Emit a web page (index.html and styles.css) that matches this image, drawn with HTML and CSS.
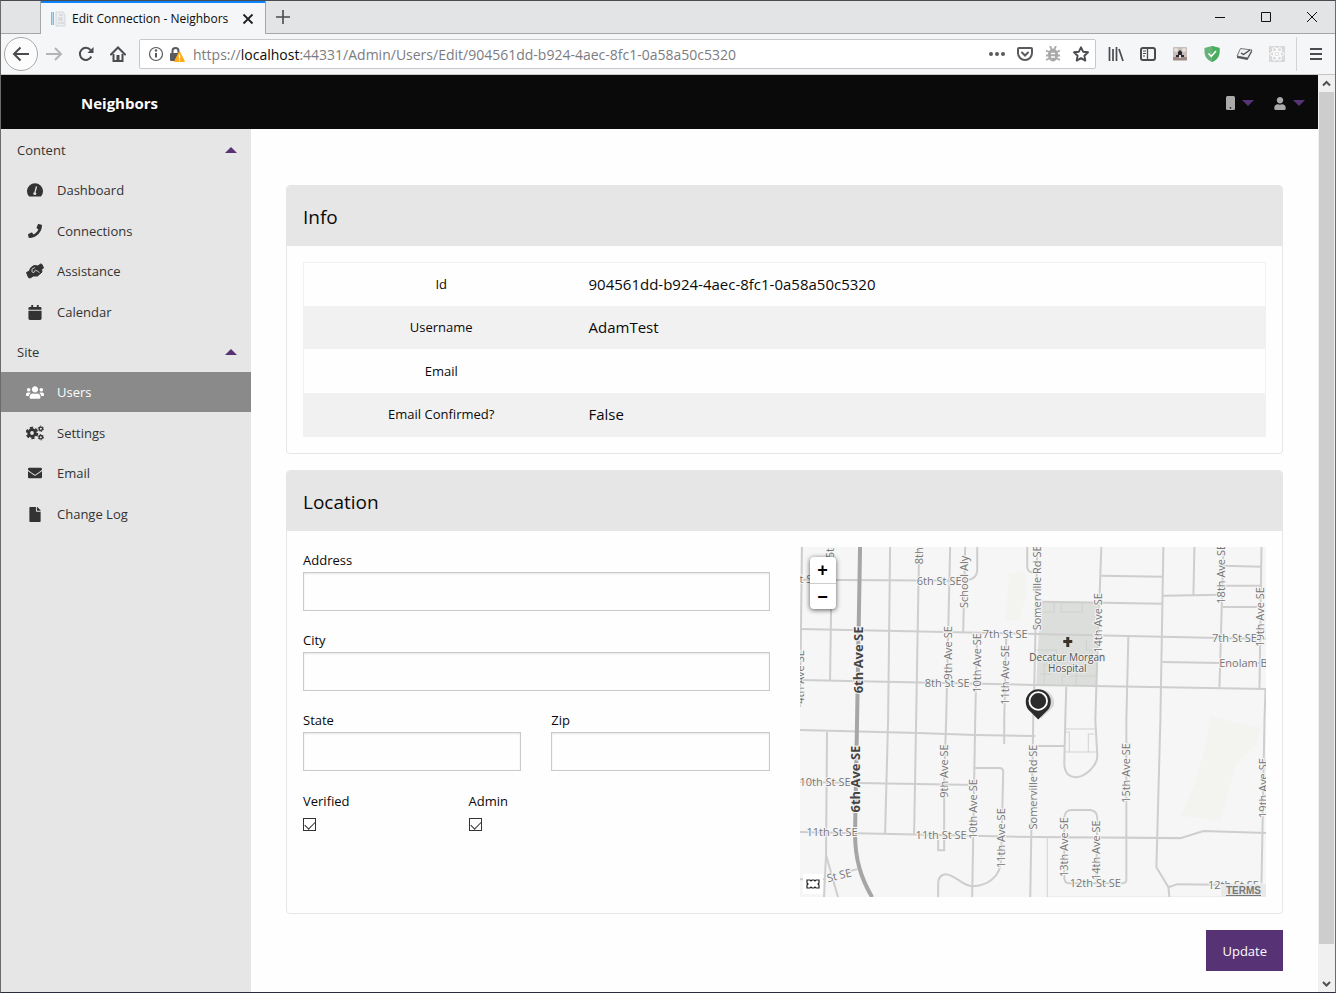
FILE: index.html
```
<!DOCTYPE html>
<html lang="en">
<head>
<meta charset="utf-8">
<meta name="viewport" content="width=device-width, initial-scale=1">
<title>Edit Connection - Neighbors</title>
<link rel="stylesheet" href="styles.css">
</head>
<body>
<div class="window">
  <div class="tabstrip">
    <div class="tab">
      <svg class="favicon" width="16" height="16" viewBox="0 0 16 16"><rect x="1" y="1" width="3" height="13" fill="#7fbbe0"/><rect x="2" y="1" width="1" height="13" fill="#b5d9ee"/><path d="M6 1h7l2 3v11H6z" fill="#eceef0" stroke="#d3d7db"/><path d="M9 4h4M8 7h5M8 9h5M8 12h6" stroke="#c6cbd0"/></svg>
      <span class="tab-title">Edit Connection - Neighbors</span>
      <button class="plain" aria-label="Close tab"><svg width="12" height="12" viewBox="0 0 12 12"><path d="M1.500 1.500l9 9M10.500 1.500l-9 9" stroke="#222" stroke-width="1.800"/></svg></button>
    </div>
    <button class="plain new-tab" aria-label="New tab"><svg width="14" height="14" viewBox="0 0 14 14"><path d="M7 0v14M0 7h14" stroke="#4a4a4f" stroke-width="1.600"/></svg></button>
    <div class="window-buttons">
      <button class="plain" aria-label="Minimize"><svg width="12" height="12" viewBox="0 0 12 12"><path d="M1 6.500h10" stroke="#111"/></svg></button>
      <button class="plain" aria-label="Maximize"><svg width="12" height="12" viewBox="0 0 12 12"><path d="M1.500 1.500h9v9h-9z" fill="none" stroke="#111"/></svg></button>
      <button class="plain" aria-label="Close"><svg width="12" height="12" viewBox="0 0 12 12"><path d="M1 1l10 10M11 1L1 11" stroke="#111"/></svg></button>
    </div>
  </div>

  <div class="toolbar">
    <button class="plain back" aria-label="Back"><svg width="18" height="16" viewBox="0 0 18 16"><path d="M17 8H2M8.500 1.500L2 8l6.500 6.500" fill="none" stroke="#4a4a4f" stroke-width="2"/></svg></button>
    <button class="plain nav" aria-label="Forward"><svg width="17" height="16" viewBox="0 0 17 16"><path d="M0 8h15M9 2l6 6-6 6" fill="none" stroke="#b4b4b6" stroke-width="2"/></svg></button>
    <button class="plain nav" aria-label="Reload"><svg width="16" height="16" viewBox="0 0 16 16"><path d="M13.300 10.500A6 6 0 1 1 12.500 4" fill="none" stroke="#4a4a4f" stroke-width="2"/><path d="M15.500 1v6h-6z" fill="#4a4a4f"/></svg></button>
    <button class="plain nav" aria-label="Home"><svg width="16" height="16" viewBox="0 0 16 16"><path d="M1 8.500L8 1.500l7 7" fill="none" stroke="#4a4a4f" stroke-width="2" stroke-linecap="round"/><path d="M3.500 8v7h9V8" fill="none" stroke="#4a4a4f" stroke-width="2"/><path d="M6.500 9h3v6h-3z" fill="#4a4a4f"/></svg></button>
    <div class="urlbar">
      <svg width="16" height="16" viewBox="0 0 16 16"><circle cx="8" cy="8" r="6.500" fill="none" stroke="#5a5a5e" stroke-width="1.200"/><path d="M8 7v4.500" stroke="#5a5a5e" stroke-width="2"/><circle cx="8" cy="4.500" r="1.200" fill="#5a5a5e"/></svg>
      <svg width="16" height="16" viewBox="0 0 16 16"><path d="M3.500 8V5a3 3 0 0 1 6 0v3" fill="none" stroke="#5a5a5e" stroke-width="2"/><rect x="1" y="7" width="11" height="8" rx="1" fill="#5a5a5e"/><path d="M10.500 5.500l5 10h-10z" fill="#ffab1a" stroke="#ffab1a" stroke-width="1" stroke-linejoin="round"/><path d="M10.500 8.500v4M10.500 13.500v1.300" stroke="#fff" stroke-width="1.300"/></svg>
      <div class="address">https://<span class="host">localhost</span>:44331/Admin/Users/Edit/904561dd-b924-4aec-8fc1-0a58a50c5320</div>
      <div class="url-actions">
        <svg width="16" height="16" viewBox="0 0 16 16"><g fill="#5a5a5e"><circle cx="2" cy="8" r="2"/><circle cx="8" cy="8" r="2"/><circle cx="14" cy="8" r="2"/></g></svg>
        <svg width="16" height="16" viewBox="0 0 16 16"><path d="M2 2h12a1 1 0 0 1 1 1v4A7 7 0 0 1 1 7V3a1 1 0 0 1 1-1z" fill="none" stroke="#5a5a5e" stroke-width="2"/><path d="M5 6.500l3 3 3-3" fill="none" stroke="#5a5a5e" stroke-width="2" stroke-linecap="round"/></svg>
        <svg width="16" height="16" viewBox="0 0 16 16"><path d="M5 0l1.500 3M11 0L9.500 3M1 4.500l4 2M15 4.500l-4 2M1 9.500h14M1 14l4-2M15 14l-4-2" stroke="#a9a9ab" fill="none" stroke-width="1.800"/><ellipse cx="8" cy="9" rx="5" ry="6.500" fill="#a9a9ab"/><path d="M6 7.500h4M6 11h4" stroke="#fff" stroke-width="1.300"/></svg>
        <svg width="16" height="16" viewBox="0 0 16 16"><path d="M8 1.300l2.100 4.400 4.900.6-3.600 3.400.9 4.900L8 12.200l-4.300 2.400.9-4.900L1 6.300l4.900-.6z" fill="none" stroke="#4a4a4f" stroke-width="1.900" stroke-linejoin="round"/></svg>
      </div>
    </div>
    <div class="extensions">
      <svg width="16" height="16" viewBox="0 0 16 16"><path d="M1.500 1v14M5 3v12M8.500 1v14M11 3l4 12" stroke="#4a4a4f" stroke-width="1.700"/></svg>
      <svg width="16" height="16" viewBox="0 0 16 16"><rect x="1" y="2" width="14" height="12" rx="2" fill="none" stroke="#4a4a4f" stroke-width="2"/><path d="M7.500 2v12" stroke="#4a4a4f" stroke-width="1.300"/><path d="M3 5h3M3 7.500h3M3 10h2" stroke="#4a4a4f"/></svg>
      <svg width="16" height="16" viewBox="0 0 16 16"><rect x="1" y="1" width="14" height="14" rx="1" fill="#c9beb9"/><path d="M1 11h14v3H1z" fill="#a08a85"/><path d="M4 9h2V6l2-2 2 2v3h2v2H4z" fill="#2b292c"/><circle cx="4" cy="4" r="2" fill="#e7dfdb"/><circle cx="12" cy="4" r="2" fill="#e7dfdb"/><path d="M7 9h2v3H7z" fill="#ddd"/></svg>
      <svg width="16" height="16" viewBox="0 0 16 16"><path d="M8 0l7.500 2v4c0 5-3.500 8.500-7.500 10C4 14.500.5 11 .5 6V2z" fill="#67b279"/><path d="M8 0l7.500 2v4c0 5-3.500 8.500-7.500 10z" fill="#4aad60"/><path d="M4.500 7.500l2.800 2.800L12 5" fill="none" stroke="#fff" stroke-width="1.600"/></svg>
      <svg width="17" height="16" viewBox="0 0 17 16"><path d="M4.500 2.500L16 4l-4.500 8L1 10z" fill="#f0f0f0" stroke="#777"/><path d="M1 10l10.500 2L16 4v2l-4.500 8L1 12z" fill="#555"/><path d="M5 7l2.500 1.500L14 4" fill="none" stroke="#444" stroke-width="1.200"/></svg>
      <svg width="16" height="16" viewBox="0 0 16 16"><path d="M0 0h16v16H0z" fill="#d9d9d9"/><g fill="none" stroke="#fff" stroke-width="1"><ellipse cx="8" cy="8" rx="7" ry="2.700"/><ellipse cx="8" cy="8" rx="7" ry="2.700" transform="rotate(60 8 8)"/><ellipse cx="8" cy="8" rx="7" ry="2.700" transform="rotate(120 8 8)"/></g><circle cx="8" cy="8" r="1.300" fill="#fff"/></svg>
    </div>
    <button class="plain menu" aria-label="Menu"><svg width="12" height="14" viewBox="0 0 12 14"><path d="M0 2h12M0 7h12M0 12h12" stroke="#4a4a4f" stroke-width="2"/></svg></button>
  </div>

  <div class="viewport">
    <div class="page">
      <header class="topbar">
        <a class="brand" href="#">Neighbors</a>
        <nav class="top-menus" aria-label="Account">
          <button class="plain" aria-label="Device"><svg width="9" height="14" viewBox="0 0 9 14"><rect width="9" height="14" rx="1.500" fill="#aaa"/><circle cx="4.500" cy="11.800" r=".9" fill="#222"/></svg><span class="caret down"></span></button>
          <button class="plain" aria-label="User"><svg width="12" height="13" viewBox="0 0 448 512"><path fill="#aaa" d="M224 256c70.700 0 128-57.300 128-128S294.700 0 224 0 96 57.300 96 128s57.300 128 128 128zm89.600 32h-16.700c-22.200 10.200-46.900 16-72.900 16s-50.600-5.800-72.900-16h-16.700C60.200 288 0 348.200 0 422.400V464c0 26.500 21.500 48 48 48h352c26.500 0 48-21.500 48-48v-41.600c0-74.200-60.200-134.400-134.400-134.400z"/></svg><span class="caret down"></span></button>
        </nav>
      </header>
      <div class="body">
        <nav class="sidebar" aria-label="Main">
          <button class="plain group">Content<span class="caret up"></span></button>
          <ul class="links">
            <li><a href="#"><svg width="18" height="16" viewBox="0 0 18 16"><path d="M3 14.500a8 8 0 1 1 12 0z" fill="#333"/><path d="M10.500 4.500L9 10" stroke="#e6e6e6" stroke-width="1.300"/><circle cx="8.800" cy="11.500" r="1.500" fill="#e6e6e6"/></svg>Dashboard</a></li>
            <li><a href="#"><svg width="18" height="14" viewBox="0 0 512 512"><path d="M493.400 24.600l-104-24c-11.300-2.600-22.900 3.300-27.500 13.900l-48 112c-4.200 9.800-1.400 21.300 6.900 28l60.600 49.600c-36 76.700-98.900 140.500-177.200 177.200l-49.600-60.600c-6.800-8.300-18.200-11.100-28-6.900l-112 48C3.900 366.500-2 378.100.6 389.400l24 104C27.100 504.200 36.700 512 48 512c256.100 0 464-207.500 464-464 0-11.200-7.700-20.900-18.600-23.400z"/></svg>Connections</a></li>
            <li><a href="#"><svg width="18" height="16" viewBox="0 0 18 16"><path d="M.5 9.500l3-1.500L4.500 5 8 2.500l4 .5 2.500-2 1.500.5L17.500 5l-2 1.500.5 2.500-4.500 4H7.500L4 15l-1.500-.5z" stroke="#333" stroke-linejoin="round"/><path d="M9 4.500L6 6v3l2 .500L9.500 7l4 2.500" fill="none" stroke="#e6e6e6" stroke-width=".8"/></svg>Assistance</a></li>
            <li><a href="#"><svg width="18" height="15" viewBox="0 0 448 512"><path d="M12 192h424c6.600 0 12 5.400 12 12v260c0 26.500-21.500 48-48 48H48c-26.500 0-48-21.500-48-48V204c0-6.600 5.400-12 12-12zm436-44v-36c0-26.500-21.500-48-48-48h-48V12c0-6.600-5.400-12-12-12h-40c-6.600 0-12 5.400-12 12v52H160V12c0-6.600-5.400-12-12-12h-40c-6.600 0-12 5.400-12 12v52H48C21.500 64 0 85.500 0 112v36c0 6.600 5.400 12 12 12h424c6.600 0 12-5.400 12-12z"/></svg>Calendar</a></li>
          </ul>
          <button class="plain group">Site<span class="caret up"></span></button>
          <ul class="links">
            <li><a class="current" href="#"><svg width="18" height="15" viewBox="0 0 640 512"><path d="M96 224c35.300 0 64-28.700 64-64s-28.700-64-64-64-64 28.700-64 64 28.700 64 64 64zm448 0c35.300 0 64-28.700 64-64s-28.700-64-64-64-64 28.700-64 64 28.700 64 64 64zm32 32h-64c-17.600 0-33.500 7.100-45.100 18.600 40.300 22.100 68.900 62 75.100 109.400h66c17.700 0 32-14.300 32-32v-32c0-35.300-28.700-64-64-64zm-256 0c61.900 0 112-50.100 112-112S381.900 32 320 32 208 82.100 208 144s50.100 112 112 112zm76.800 32h-8.300c-20.800 10-43.900 16-68.500 16s-47.600-6-68.500-16h-8.300C179.600 288 128 339.600 128 403.200V432c0 26.500 21.500 48 48 48h288c26.500 0 48-21.500 48-48v-28.800c0-63.600-51.600-115.200-115.200-115.200zm-223.700-13.400C161.500 263.100 145.600 256 128 256H64c-35.300 0-64 28.700-64 64v32c0 17.700 14.300 32 32 32h65.900c6.300-47.400 34.900-87.300 75.200-109.400z"/></svg>Users</a></li>
            <li><a href="#"><svg width="18" height="16" viewBox="0 0 18 16"><g fill="none" stroke="#333"><circle cx="6" cy="8" r="3.300" stroke-width="2.800"/><circle cx="6" cy="8" r="5.300" stroke-width="2" stroke-dasharray="3.200 2.350"/><circle cx="14.800" cy="3.800" r="1.700" stroke-width="1.400"/><circle cx="14.800" cy="3.800" r="2.700" stroke-width="1" stroke-dasharray="1.400 1.430"/><circle cx="14.800" cy="12.200" r="1.700" stroke-width="1.400"/><circle cx="14.800" cy="12.200" r="2.700" stroke-width="1" stroke-dasharray="1.400 1.430"/></g></svg>Settings</a></li>
            <li><a href="#"><svg width="18" height="14" viewBox="0 0 512 512"><path d="M502.300 190.800c3.900-3.100 9.700-.2 9.700 4.700V400c0 26.500-21.500 48-48 48H48c-26.500 0-48-21.500-48-48V195.600c0-5 5.700-7.800 9.700-4.700 22.400 17.400 52.100 39.500 154.100 113.600 21.100 15.400 56.700 47.800 92.200 47.600 35.700.3 72-32.800 92.300-47.600 102-74.100 131.600-96.300 154-113.700zM256 320c23.200.4 56.600-29.200 73.400-41.400 132.700-96.300 142.800-104.700 173.400-128.700 5.800-4.500 9.200-11.500 9.200-18.900v-19c0-26.500-21.500-48-48-48H48c-26.500 0-48 21.500-48 48v19c0 7.400 3.400 14.300 9.200 18.900 30.600 23.900 40.700 32.400 173.400 128.700 16.800 12.200 50.200 41.800 73.400 41.400z"/></svg>Email</a></li>
            <li><a href="#"><svg width="18" height="15" viewBox="0 0 384 512"><path d="M224 136V0H24C10.700 0 0 10.700 0 24v464c0 13.300 10.700 24 24 24h336c13.300 0 24-10.700 24-24V160H248c-13.200 0-24-10.800-24-24zm160-14.100v6.100H256V0h6.100c6.400 0 12.500 2.500 17 7l97.900 98c4.500 4.500 7 10.600 7 16.900z"/></svg>Change Log</a></li>
          </ul>
        </nav>

        <main class="content">
          <section class="card">
            <h2 class="card-title">Info</h2>
            <div class="card-body">
              <table class="info">
                <tr><th scope="row">Id</th><td>904561dd-b924-4aec-8fc1-0a58a50c5320</td></tr>
                <tr><th scope="row">Username</th><td>AdamTest</td></tr>
                <tr><th scope="row">Email</th><td></td></tr>
                <tr><th scope="row">Email Confirmed?</th><td>False</td></tr>
              </table>
            </div>
          </section>

          <section class="card">
            <h2 class="card-title">Location</h2>
            <div class="card-body location">
              <form class="fields" id="location">
                <div class="field"><label for="address">Address</label><input id="address" type="text"></div>
                <div class="field"><label for="city">City</label><input id="city" type="text"></div>
                <div class="halves">
                  <div class="field"><label for="state">State</label><input id="state" type="text"></div>
                  <div class="field"><label for="zip">Zip</label><input id="zip" type="text"></div>
                </div>
                <div class="thirds">
                  <div class="field"><label for="verified">Verified</label><input id="verified" type="checkbox" checked></div>
                  <div class="field"><label for="admin">Admin</label><input id="admin" type="checkbox" checked></div>
                </div>
              </form>
              <div class="map">
                <svg class="map-canvas" viewBox="800 547 466 350" preserveAspectRatio="xMidYMid slice" role="img" aria-label="Street map">
                  <rect class="land" x="600" y="400" width="900" height="700"/>
                  <g class="park">
                    <path d="M1009 574l16-2 2 20-8 28h-14z"/>
                    <path d="M1210 716l30 8 20 4-4 16-20 20-10 34-6 22-39-4 13-32 10-34z"/>
                  </g>
                  <path class="hospital" d="M1040 602h58l-2 83h-60z"/>
                  <g class="lots"><path d="M1040 612h14v-10M1061 602v10h21v-10M1036 650h20v14h-12v21M1056 668h20v17M1076 676h20M1086 640v10h10M1040 674h10M1062 684v-8h14"/></g>
                  <g class="thin"><path d="M1065 729h30M1065 752h31M1069 732v20M1069 732h-4M1088 752v-18h6M1047 837v60M1047 897h200"/></g>
                  <g class="roads">
                    <path d="M802 547l-2 160M832 547l-2 133M890 547l-2 173-3 113M919 547l-3 173-2 114M950 547l-4 173-2 60v70h-6v-15M965 547l-2 86M977 547v24q-1 8-9 9M977 633l-2 87-3 177M1006 637l-2 83v24M1027 547v21q1 5 8 5"/>
                    <path d="M1037 547l-3 140-1 33-3 177M1101 547l-5 140-1 33M1163 547l-3 173-4 147 12 20 1 10M1194 547l-1 48M1223 547l-4 140M1261 547l-2 141M1265 689l-1 31-3 163M1128 637l-2 83M1066 687l-1 33-1 43c0 11 6 15 13 14 8-1 20-11 20-21l-2-36"/>
                    <path d="M800 580l168 1M800 629l235 5 231 5M800 680l235 5 231 4M1042 602l120 2M1100 576l63 1M1163 596l59-1M1223 566l38 1M1223 586h38M1222 607h39M1162 662l58 1h46M1035 746h29"/>
                    <path d="M800 730l118 3 57 2 60 1M827 732l-1 123 12 42M826 855l-2 42M800 782l175 3M800 832l235 5 145 1 23-7 63 2M975 768h24q4 0 4 4l-2 85c0 21-15 29-29 29-10 0-17-12-27-12q-7 1-7 10v13M800 879h25M846 872l11-3M1126 720v160q0 3-5 3h-52q-5 0-5-6v-60q1-7 7-7h19q7 1 7 8l-1 62M1168 887l9-3 89 1"/>
                  </g>
                  <path class="highway" d="M860 547l-3 173-2 113c0 27 6 45 17 64"/>
                  <g class="labels">
                    <text transform="translate(834 550) rotate(-90)">5th</text>
                    <text transform="translate(804 677) rotate(-90)">4th Ave SE</text>
                    <text transform="translate(923 556) rotate(-90)">8th</text>
                    <text transform="translate(968 582) rotate(-90)">School Aly</text>
                    <text x="806" y="583">t S</text>
                    <text x="939" y="585">6th St SE</text>
                    <text x="1005" y="638">7th St SE</text>
                    <text x="947" y="687">8th St SE</text>
                    <text transform="translate(952 653) rotate(-90)">9th Ave SE</text>
                    <text transform="translate(981 663) rotate(-90)">10th Ave SE</text>
                    <text transform="translate(1009 675) rotate(-90)">11th Ave SE</text>
                    <text transform="translate(1041 588) rotate(-90)">Somerville Rd SE</text>
                    <text transform="translate(1102 623) rotate(-90)">14th Ave SE</text>
                    <text transform="translate(1225 574) rotate(-90)">18th Ave SE</text>
                    <text transform="translate(1264 617) rotate(-90)">19th Ave SE</text>
                    <text x="1234" y="642">7th St SE</text>
                    <text x="1243" y="667">Enolam B</text>
                    <text x="825" y="786">10th St SE</text>
                    <text x="832" y="836">11th St SE</text>
                    <text x="941" y="839">11th St SE</text>
                    <text transform="translate(948 771) rotate(-90)">9th Ave SE</text>
                    <text transform="translate(977 809) rotate(-90)">10th Ave SE</text>
                    <text transform="translate(1005 838) rotate(-90)">11th Ave SE</text>
                    <text transform="translate(1037 787) rotate(-90)">Somerville Rd SE</text>
                    <text transform="translate(1130 773) rotate(-90)">15th Ave SE</text>
                    <text transform="translate(1068 847) rotate(-90)">13th Ave SE</text>
                    <text transform="translate(1100 850) rotate(-90)">14th Ave SE</text>
                    <text transform="translate(1266 788) rotate(-90)">19th Ave SE</text>
                    <text x="1095" y="887">12th St SE</text>
                    <text x="1233" y="889">12th St SE</text>
                    <text transform="translate(840 879) rotate(-14)">St SE</text>
                    <text class="place" x="1067" y="661">Decatur Morgan</text>
                    <text class="place" x="1067" y="672">Hospital</text>
                    <text class="major" transform="translate(863 660) rotate(-90)">6th Ave SE</text>
                    <text class="major" transform="translate(860 779) rotate(-90)">6th Ave SE</text>
                  </g>
                  <path d="M1066 637h3v3h3v3h-3v4h-3v-4h-3v-3h3z" fill="#3b3327"/>
                  <path d="M1041 690c8 0 13 6 13 13 0 6-8 9-13 16z" fill="#000" opacity=".12"/>
                  <path d="M1038 719.500l-8-8a12.500 12.500 0 1 1 16 0z" fill="#2c2c2c"/>
                  <circle cx="1038" cy="701" r="8.800" fill="#2c2c2c" stroke="#fff" stroke-width="1.800"/>
                </svg>
                <div class="zoom"><button aria-label="Zoom in">+</button><button aria-label="Zoom out">−</button></div>
                <div class="map-logo"><svg width="14" height="10" viewBox="0 0 14 10"><path d="M1 1h3l1 1 1-1h2l1 1 1-1h3v3l-1 1 1 1v3h-3L9 8 8 9H6L5 8 4 9H1V6l1-1-1-1z" fill="none" stroke="#222" stroke-width="1.200"/></svg></div>
                <a class="terms" href="#">TERMS</a>
              </div>
            </div>
          </section>
          <button class="update" form="location" type="button">Update</button>
        </main>
      </div>
    </div>
    <div class="scrollbar" aria-hidden="true">
      <svg width="17" height="17" viewBox="0 0 17 17"><path d="M5 10.500L8.500 7l3.500 3.500" fill="none" stroke="#505050" stroke-width="2"/></svg>
      <div class="thumb"></div>
      <svg width="17" height="17" viewBox="0 0 17 17"><path d="M5 7l3.500 3.500L12 7" fill="none" stroke="#505050" stroke-width="2"/></svg>
    </div>
  </div>
</div>
</body>
</html>
```
FILE: styles.css
```
* { box-sizing: border-box; }
body {
  margin: 0;
  font-family: "Open Sans", "Noto Sans", sans-serif;
  font-size: 13px;
  color: #0a0a0a;
}
svg { display: block; flex: none; }
a { color: inherit; text-decoration: none; }
.plain {
  display: flex;
  align-items: center;
  justify-content: center;
  padding: 0;
  border: 0;
  background: none;
  color: inherit;
  font: inherit;
}

.window {
  display: flex;
  flex-direction: column;
  height: 100vh;
  border: 1px solid #6b6b6b;
  border-top-color: #4b4a50;
  border-bottom-color: #292c3c;
}

/* Browser chrome */
.tabstrip {
  display: flex;
  flex: none;
  height: 33px;
  padding-left: 39px;
  background: #e3e4e6;
  border-bottom: 1px solid #a6a6a8;
}
.tab {
  display: flex;
  align-items: center;
  gap: 6px;
  width: 226px;
  height: 33px;
  padding: 2px 11px 0 9px;
  background: #f5f6f7;
  border: solid #a6a6a8;
  border-width: 0 1px;
  box-shadow: inset 0 2px #0a84ff;
}
.tab-title { flex: 1; font-size: 12px; white-space: nowrap; }
.new-tab { width: 34px; }
.window-buttons { display: flex; margin-left: auto; }
.window-buttons button { width: 46px; }
.toolbar {
  display: flex;
  flex: none;
  align-items: center;
  height: 41px;
  padding-left: 3px;
  background: #f5f6f7;
  border-bottom: 1px solid #c6c6c8;
}
.back {
  width: 34px;
  height: 34px;
  border: 1px solid #a9a9ab;
  border-radius: 50%;
  background: #fcfcfc;
}
.nav { width: 32px; height: 32px; }
.urlbar {
  display: flex;
  flex: 1;
  align-items: center;
  gap: 5px;
  height: 30px;
  margin-left: 5px;
  padding: 0 6px 0 8px;
  background: #fff;
  border: 1px solid #c8c8ca;
  border-radius: 2px;
}
.address { margin-left: 3px; color: #7c7c7f; font-size: 14px; white-space: nowrap; }
.host { color: #0c0c0d; }
.url-actions { display: flex; gap: 12px; margin-left: auto; }
.extensions { display: flex; gap: 16px; padding: 0 11px 0 12px; }
.menu { width: 39px; height: 34px; border-left: 1px solid #d3d3d5; }

/* Page */
.viewport { display: flex; flex: 1; min-height: 0; }
.page { display: flex; flex: 1; flex-direction: column; min-width: 0; overflow: hidden; background: #fefefe; }
.scrollbar { display: flex; flex-direction: column; flex: none; background: #f0f0f0; }
.thumb { flex: 1; margin: 0 1px 31px; background: #cdcdcd; }

.topbar {
  display: flex;
  flex: none;
  align-items: center;
  justify-content: space-between;
  height: 54px;
  padding: 2px 13px 0 80px;
  background: #0a0a0a;
}
.brand { color: #fff; font-size: 15px; font-weight: 700; }
.top-menus { display: flex; gap: 20px; }
.top-menus button { gap: 7px; }
.caret { border: solid transparent; border-width: 0 6px; }
.caret.up { border-bottom: 6px solid #573275; }
.caret.down { border-top: 6px solid #573275; }

.body { display: flex; flex: 1; min-height: 0; }
.sidebar { flex: none; width: 250px; padding-top: 1px; background: #e6e6e6; color: #333; }
.group { justify-content: space-between; width: 100%; height: 40px; padding: 0 14px 0 16px; }
.links { margin: 0; padding: 0; list-style: none; }
.links li:nth-child(even) { margin-top: 1px; }
.links a { display: flex; align-items: center; gap: 13px; height: 40px; padding-left: 25px; }
.links svg { fill: #333; }
.links .current { background: #8a8a8a; color: #fefefe; }
.links .current svg { fill: #fefefe; }

.content {
  display: flex;
  flex: 1;
  flex-direction: column;
  gap: 16px;
  min-width: 0;
  padding: 56px 35px 0;
}
.card { border: 1px solid #e6e6e6; border-radius: 4px; overflow: hidden; }
.card-title {
  margin: 0;
  padding: 17px 16px 15px;
  background: #e6e6e6;
  font-size: 19px;
  font-weight: 400;
  line-height: 28px;
}
.card-body { padding: 16px; }

.info { width: 100%; border: 1px solid #f1f1f1; border-collapse: collapse; }
.info tr { height: 43px; }
.info tr:nth-child(n+3) { height: 44px; }
.info tr:nth-child(even) { background: #f1f1f1; }
.info th { width: 275px; padding: 0 10px; font-size: 13px; font-weight: 400; }
.info td { padding: 0 10px; font-size: 15px; }

.location { display: grid; grid-template-columns: 1fr 1fr; gap: 30px; }
.fields { display: flex; flex-direction: column; gap: 16px; }
.halves { display: grid; grid-template-columns: 1fr 1fr; gap: 30px; }
.thirds { display: grid; grid-template-columns: repeat(3, 1fr); gap: 30px; margin-top: 1px; }
.field { display: flex; flex-direction: column; }
.field label { padding-top: 2px; line-height: 23px; }
.field input[type="text"] {
  width: 100%;
  height: 39px;
  margin: 0;
  padding: 8px;
  border: 1px solid #cacaca;
  border-radius: 0;
  background: #fefefe;
  box-shadow: inset 0 1px 2px rgba(10, 10, 10, .1);
  font: inherit;
}
.field input[type="checkbox"] {
  appearance: none;
  width: 13px;
  height: 13px;
  margin: 5px 0 0;
  border: 1px solid #333;
  background: #fff;
}
.field input[type="checkbox"]:checked::before {
  content: "";
  display: block;
  width: 9px;
  height: 5px;
  margin: 2px 1px;
  border: solid #333;
  border-width: 0 0 1px 1px;
  transform: rotate(-45deg);
}

.map { position: relative; height: 350px; overflow: hidden; background: #f6f6f6; }
.map-canvas { width: 100%; height: 100%; }
.land { fill: #f6f6f6; }
.park { fill: #f3f4ef; }
.hospital { fill: #dcdedb; }
.lots { fill: none; stroke: #cfd1ce; stroke-width: 1; }
.thin { fill: none; stroke: #d2d2d2; stroke-width: 1; }
.roads { fill: none; stroke: #cecece; stroke-width: 2; }
.highway { fill: none; stroke: #a6a6a6; stroke-width: 4; }
.labels text {
  fill: #757575;
  stroke: #f6f6f6;
  stroke-width: 2px;
  paint-order: stroke;
  font-size: 11px;
  text-anchor: middle;
}
.labels .place { fill: #555; stroke: #ececec; font-size: 10px; }
.labels .major { fill: #444; font-size: 13px; font-weight: 700; }
.zoom {
  position: absolute;
  top: 10px;
  left: 10px;
  width: 26px;
  border-radius: 4px;
  background: #fff;
  box-shadow: 0 1px 5px rgba(0, 0, 0, .65);
}
.zoom button {
  display: block;
  width: 26px;
  height: 26px;
  padding: 0;
  border: 0;
  background: none;
  color: #000;
  font: 700 18px/26px "Liberation Sans", sans-serif;
}
.zoom button + button { border-top: 1px solid #ccc; line-height: 24px; }
.map-logo { position: absolute; bottom: 3px; left: 3px; padding: 5px 3px; background: #fff; }
.terms {
  position: absolute;
  right: 0;
  bottom: 0;
  padding: 0 5px;
  background: #e9e9e9;
  color: #777;
  font: 700 10px/13px "Liberation Sans", sans-serif;
  text-decoration: underline;
}
.update {
  align-self: flex-end;
  height: 41px;
  padding: 0 16px;
  border: 0;
  background: #573275;
  color: #fefefe;
  font: inherit;
}
```
